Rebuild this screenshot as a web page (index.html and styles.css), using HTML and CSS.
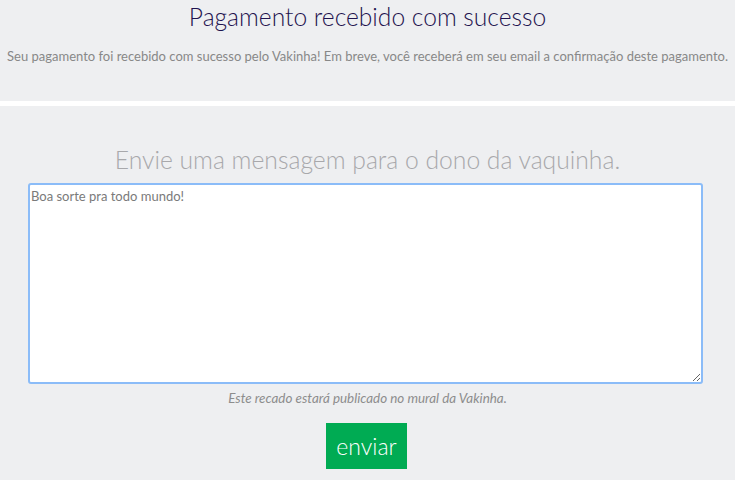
FILE: index.html
```html
<!DOCTYPE html>
<html lang="pt-BR">
<head>
<meta charset="utf-8">
<title>Pagamento recebido</title>
<link rel="stylesheet" href="styles.css">
</head>
<body>
<section class="top">
  <h1 class="title">Pagamento recebido com sucesso</h1>
  <p class="subtitle">Seu pagamento foi recebido com sucesso pelo Vakinha! Em breve, você receberá em seu email a confirmação deste pagamento.</p>
</section>
<div class="divider"></div>
<section class="message">
  <h2 class="heading">Envie uma mensagem para o dono da vaquinha.</h2>
  <textarea class="box">Boa sorte pra todo mundo!</textarea>
  <p class="note">Este recado estará publicado no mural da Vakinha.</p>
  <button class="send" type="button">enviar</button>
</section>
</body>
</html>
```
FILE: styles.css
```css
html, body {
  margin: 0;
  padding: 0;
  background: #eeeff1;
  font-family: Lato, "Open Sans", sans-serif;
  overflow: hidden;
}
.top {
  height: 101px;
  display: flex;
  flex-direction: column;
  align-items: center;
}
.title {
  margin: 2px 0 0;
  font-size: 24.6px;
  font-weight: 300;
  line-height: 30px;
  color: #1e134f;
}
.subtitle {
  margin: 16px 0 0;
  font-size: 13px;
  line-height: 16px;
  color: #888888;
  white-space: nowrap;
}
.divider {
  height: 5px;
  background: #ffffff;
}
.message {
  display: flex;
  flex-direction: column;
  align-items: center;
  padding-top: 38px;
}
.heading {
  margin: 0;
  font-size: 24.7px;
  font-weight: 300;
  line-height: 32px;
  color: #a8a8ab;
}
.box {
  box-sizing: border-box;
  align-self: flex-start;
  width: 675px;
  height: 201px;
  margin: 7px 0 0 28px;
  border: 2px solid #8bbcf8;
  border-radius: 3px;
  background: #fff;
  padding: 2px 1px;
  font-family: Lato, sans-serif;
  font-size: 13px;
  line-height: 18px;
  color: #7a7a7a;
  outline: none;
}
.note {
  margin: 5px 0 0;
  font-size: 13.4px;
  line-height: 18px;
  font-style: italic;
  color: #8d8d8d;
}
.send {
  margin-top: 16px;
  margin-left: -2px;
  width: 81px;
  height: 46px;
  border: none;
  background: #00ab53;
  color: #fff;
  font-family: Lato, sans-serif;
  font-size: 23px;
  font-weight: 300;
  padding: 0;
}
```
